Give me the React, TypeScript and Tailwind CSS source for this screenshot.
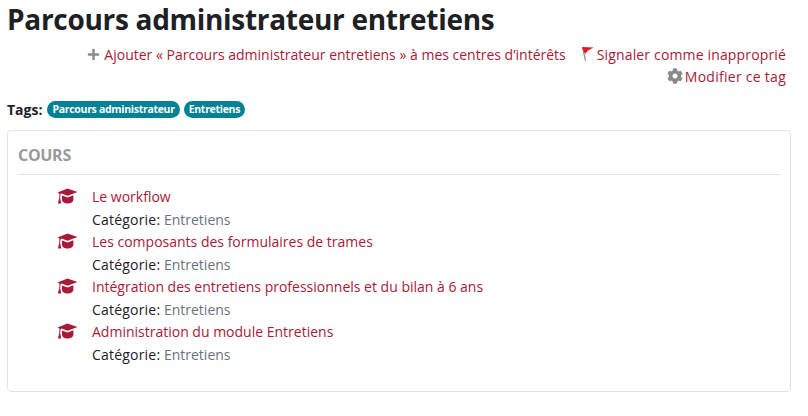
import React from 'react';
import { FaCog, FaPlus } from 'react-icons/fa';

const courses = [
  'Le workflow',
  'Les composants des formulaires de trames',
  'Intégration des entretiens professionnels et du bilan à 6 ans',
  'Administration du module Entretiens',
];

const CourseCap = () => (
  <svg viewBox="0 0 21 17" className="w-[21px] h-[17px] mr-[14px] text-[#a8193a]" fill="currentColor">
    <path d="M10.5 0.5 L20.5 4 L10.5 7.8 L4.6 5.6 L3.4 6.4 L3.2 11 L2.2 11 L2.4 5.6 L0.5 4.4 Z" />
    <path d="M5 7.4 L10.5 9.4 L16.4 7.2 L16.4 11.5 C16.4 14 13.4 15.6 10.5 15.6 C7.6 15.6 5 14 5 11.5 Z" />
    <path d="M2 11 L3.4 11 L4.2 15.6 L0.9 15.6 Z" />
  </svg>
);

const App: React.FC = () => {
  return (
    <div className="w-[808px] h-[416px] overflow-hidden bg-white px-[7px] font-['Open_Sans',sans-serif] text-[14px] text-[#1d2125]">
      <h1 className="h-[43px] -mt-[2px] text-[28px] leading-[42px] font-bold tracking-[-0.3px] text-[#1d2125]">
        Parcours administrateur entretiens
      </h1>

      <div className="mt-[2px] pr-[15px] flex flex-col items-end text-[#a8193a] leading-[21px]">
        <div className="flex items-center h-[22px]">
          <a className="flex items-center">
            <FaPlus className="w-[13px] h-[13px] mr-[4px] text-[#8a8a8a]" />
            Ajouter « Parcours administrateur entretiens » à mes centres d’intérêts
          </a>
          <a className="flex items-center ml-[15px] tracking-[0.15px]">
            <svg viewBox="0 0 14 16" className="w-[14px] h-[16px] mr-[2px]">
              <path d="M1.5 1.5 L4.5 14.5" stroke="#8a8a8a" strokeWidth="1.2" fill="none" />
              <path d="M1 1 L12.5 1.5 L7 4.5 L4 8 Z" fill="#e8141c" />
            </svg>
            Signaler comme inapproprié
          </a>
        </div>
        <a className="flex items-center h-[22px] tracking-[0.27px]">
          <FaCog className="w-[16px] h-[16px] mr-[2px] text-[#8a8a8a]" />
          Modifier ce tag
        </a>
      </div>

      <div className="flex items-center mt-[13px] h-[18px]">
        <span className="font-bold text-[14px] mr-[5px]">Tags:</span>
        <span className="h-[17px] rounded-full bg-[#008196] px-[5px] text-[10.5px] leading-[17px] font-bold tracking-[-0.3px] text-white">
          Parcours administrateur
        </span>
        <span className="ml-[4px] h-[17px] rounded-full bg-[#008196] px-[5px] text-[10.5px] leading-[17px] font-bold tracking-[-0.3px] text-white">
          Entretiens
        </span>
      </div>

      <div className="mt-[12px] w-[784px] h-[262px] rounded-[4px] border border-[#e3e3e3] px-[10px]">
        <h3 className="mt-[13px] pb-[7px] border-b border-[#dee2e6] text-[16px] leading-[23px] font-bold text-[#999999] tracking-[-0.3px]">
          COURS
        </h3>
        <ul className="mt-[10px]">
          {courses.map((name) => (
            <li key={name} className="h-[45px] pl-[39px]">
              <div className="flex items-center h-[22px]">
                <CourseCap />
                <a className="text-[#a8193a]">{name}</a>
              </div>
              <div className="pl-[35px] leading-[23px] mt-[1px]">
                <span className="tracking-[0.2px]">Catégorie:</span> <span className="text-[#6a737b]">Entretiens</span>
              </div>
            </li>
          ))}
        </ul>
      </div>
    </div>
  );
};

export default App;
